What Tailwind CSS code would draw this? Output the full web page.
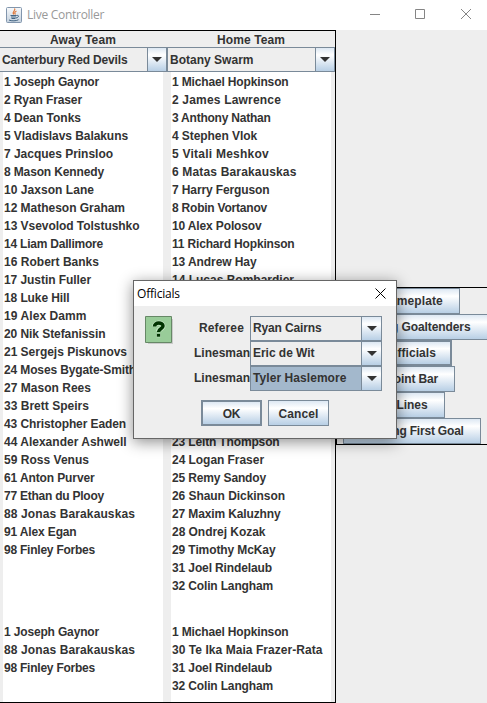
<!DOCTYPE html>
<html lang="en"><head><meta charset="utf-8"><title>Live Controller</title>
<script src="https://cdn.jsdelivr.net/npm/@tailwindcss/browser@4"></script></head>
<body class="w-[487px] h-[703px] overflow-hidden bg-[#eeeeee] relative font-['Liberation_Sans',Arial,sans-serif] font-bold text-[12px] leading-[18px] text-[#333333] whitespace-nowrap">
<header class="h-[30px] bg-white flex items-center font-normal font-['Open_Sans','Noto_Sans',sans-serif] text-[#999999]">
<svg class="ml-[6px] w-4 h-4 shrink-0" viewBox="0 0 16 16"><defs><linearGradient id="j" x2="0" y2="1"><stop stop-color="#f8fafc"/><stop offset="1" stop-color="#c3d0dd"/></linearGradient></defs><rect x=".5" y=".5" width="15" height="15" rx="1" fill="url(#j)" stroke="#8296ad"/><path d="M8.500 1.500c1.800 2-3 3-.8 6M10.500 4c-2 1-2.200 2-1 3.500" fill="none" stroke="#e07a3c" stroke-width="1.200"/><path d="M4.500 8.500h6M5 10h5M5.500 11.500h4M10.500 8.500c3-.8 2.500 2-.5 2.500M3 13c2 1.300 8 1 9.500-.3" fill="none" stroke="#456684"/></svg>
<span class="ml-[5px] text-[12px] tracking-[-0.28px]">Live Controller</span>
<svg class="ml-auto w-[117px] h-[30px] shrink-0" viewBox="370 0 117 30" fill="none" stroke="#858585"><path d="M370 14.500h10M415.500 9.500h9v9h-9zM461 9l10 10M471 9l-10 10"/></svg>
</header>
<div class="flex">
<main class="w-[336px] h-[673px] border-t border-r border-b border-black grid grid-cols-[168px_167px]">
<section class="flex flex-col">
<h2 class="h-4 pl-[50px] leading-[18px]"><span data-w="66">Away Team</span></h2>
<div class="w-[167px] h-[25px] border border-l-0 border-[#7a8a99] flex"><span class="flex-1 pl-[2px] leading-[24px]"><span data-w="125.500">Canterbury Red Devils</span></span><span class="w-[19px] border-l border-[#7a8a99] bg-linear-to-b from-[#dde8f3] via-white via-30% to-[#b8cfe5] flex items-center justify-center"><svg class="w-[10px] h-[5px]" viewBox="0 0 10 5"><path d="M0 0h10L5 5z" fill="#333"/></svg></span></div>
<div class="ml-[3px] w-[160px] h-[550px] bg-white pl-px pt-px" id="away"></div>
<div class="ml-[3px] w-[160px] h-[80px] bg-white pl-px pt-px" id="awayNet"></div>
</section>
<section class="flex flex-col">
<h2 class="h-4 pl-[49px] leading-[18px]"><span data-w="68">Home Team</span></h2>
<div class="-ml-px h-[25px] border border-[#7a8a99] flex"><span class="flex-1 pl-[2px] leading-[24px]"><span data-w="83.500">Botany Swarm</span></span><span class="w-[19px] border-l border-[#7a8a99] bg-linear-to-b from-[#dde8f3] via-white via-30% to-[#b8cfe5] flex items-center justify-center"><svg class="w-[10px] h-[5px]" viewBox="0 0 10 5"><path d="M0 0h10L5 5z" fill="#333"/></svg></span></div>
<div class="ml-[3px] mr-1 h-[550px] bg-white pl-px pt-px" id="home"></div>
<div class="ml-[3px] mr-1 h-[80px] bg-white pl-px pt-px" id="homeNet"></div>
</section>
</main>
<aside class="mt-[257px] w-[151px] h-[158px] border-y border-l border-black overflow-hidden">
<div class="w-[150px] flex flex-col items-center leading-[24px]">
<button class="h-[26px] w-24 border border-[#7a8a99] bg-linear-to-b from-[#dde8f3] via-white via-30% to-[#b8cfe5]"><span data-w="61.500">Nameplate</span></button>
<button class="h-[26px] w-[152px] border border-[#7a8a99] bg-linear-to-b from-[#dde8f3] via-white via-30% to-[#b8cfe5]"><span data-w="117">Starting Goaltenders</span></button>
<button class="h-[26px] w-20 border-2 border-[#7a8a99] bg-linear-to-b from-[#dde8f3] via-white via-30% to-[#b8cfe5] leading-[22px]"><span data-w="48">Officials</span></button>
<button class="h-[26px] w-[86px] border border-[#7a8a99] bg-linear-to-b from-[#dde8f3] via-white via-30% to-[#b8cfe5]"><span data-w="52">Point Bar</span></button>
<button class="h-[26px] w-[66px] border border-[#7a8a99] bg-linear-to-b from-[#dde8f3] via-white via-30% to-[#b8cfe5]"><span data-w="31">Lines</span></button>
<button class="h-[26px] w-[138px] border border-[#7a8a99] bg-linear-to-b from-[#dde8f3] via-white via-30% to-[#b8cfe5] pl-[3px]"><span data-w="100.500">Scoring First Goal</span></button>
</div></aside>
</div>
<div role="dialog" class="absolute left-[133px] top-[280px] w-[264px] h-[159px] border border-[#666666] bg-[#eeeeee] shadow-[0_3px_14px_rgba(0,0,0,0.45)]">
<div class="h-[25px] bg-white flex items-center justify-between pl-[3px] pr-[10px] font-normal font-['Open_Sans','Noto_Sans',sans-serif] text-black"><span class="tracking-[-0.2px]">Officials</span><svg class="w-[11px] h-[11px] -mt-px" viewBox="0 0 11 11"><path d="M.5.5l10 10M10.500.5l-10 10" stroke="#000" fill="none"/></svg></div>
<div class="flex pt-[10px]">
<svg class="ml-[11px] w-[30px] h-[30px] shrink-0" viewBox="0 0 30 30"><path d="M3 3h25v25H3z" fill="#bbb" opacity=".7"/><path d="M.5.5h26v26H.5z" fill="#99cc99" stroke="#668866"/><path d="M9.500 10.500c0-4.500 8.500-4.500 8.500-.5 0 3-4.500 2.500-4.500 5.500" fill="none" stroke="#c4e6c4" stroke-width="5"/><path d="M11.500 17.500h4v3.500h-4z" fill="#003300" stroke="#c4e6c4" stroke-width=".6"/><path d="M9.500 10.500c0-4.500 8.500-4.500 8.500-.5 0 3-4.500 2.500-4.500 6" fill="none" stroke="#003300" stroke-width="3.500"/></svg>
<div class="ml-[19px] flex flex-col leading-[23px]">
<div class="flex h-[25px]"><label class="w-14 pl-[5px] leading-[25px]"><span data-w="45">Referee</span></label><div class="w-[132px] border border-[#7a8a99] flex"><span class="flex-1 pl-[2px]"><span data-w="68.500">Ryan Cairns</span></span><span class="w-5 border-l border-[#7a8a99] bg-linear-to-b from-[#dde8f3] via-white via-30% to-[#b8cfe5] flex items-center justify-center"><svg class="w-[10px] h-[5px]" viewBox="0 0 10 5"><path d="M0 0h10L5 5z" fill="#333"/></svg></span></div></div>
<div class="flex h-[25px]"><label class="w-14 leading-[25px]"><span data-w="56">Linesman</span></label><div class="w-[132px] border border-[#7a8a99] flex"><span class="flex-1 pl-[2px]"><span data-w="61.500">Eric de Wit</span></span><span class="w-5 border-l border-[#7a8a99] bg-linear-to-b from-[#dde8f3] via-white via-30% to-[#b8cfe5] flex items-center justify-center"><svg class="w-[10px] h-[5px]" viewBox="0 0 10 5"><path d="M0 0h10L5 5z" fill="#333"/></svg></span></div></div>
<div class="flex h-[25px]"><label class="w-14 leading-[25px]"><span data-w="56">Linesman</span></label><div class="w-[132px] border border-[#7a8a99] flex"><span class="flex-1 pl-[2px] bg-[#a3b8cc]"><span data-w="93.500">Tyler Haslemore</span></span><span class="w-5 border-l border-[#7a8a99] bg-linear-to-b from-[#dde8f3] via-white via-30% to-[#b8cfe5] flex items-center justify-center"><svg class="w-[10px] h-[5px]" viewBox="0 0 10 5"><path d="M0 0h10L5 5z" fill="#333"/></svg></span></div></div>
</div></div>
<div class="mt-[9px] ml-[67px] flex gap-[6px]">
<button class="w-[61px] h-[26px] border-2 border-[#7a8a99] bg-linear-to-b from-[#dde8f3] via-white via-30% to-[#b8cfe5] pt-px"><span data-w="17.500">OK</span></button>
<button class="w-[61px] h-[26px] border border-[#7a8a99] bg-linear-to-b from-[#dde8f3] via-white via-30% to-[#b8cfe5] pt-px"><span data-w="40">Cancel</span></button>
</div>
</div>
<script>
const lists = {
away: [["1 Joseph Gaynor",95],["2 Ryan Fraser",78],["4 Dean Tonks",77],["5 Vladislavs Balakuns",124],["7 Jacques Prinsloo",109],["8 Mason Kennedy",100],["10 Jaxson Lane",90],["12 Matheson Graham",121],["13 Vsevolod Tolstushko",135.5],["14 Liam Dallimore",99],["16 Robert Banks",95],["17 Justin Fuller",87],["18 Luke Hill",65.5],["19 Alex Damm",83],["20 Nik Stefanissin",101.5],["21 Sergejs Piskunovs",123],["24 Moses Bygate-Smith",132],["27 Mason Rees",87],["33 Brett Speirs",85],["43 Christopher Eaden",122],["44 Alexander Ashwell",123.5],["59 Ross Venus",85],["61 Anton Purver",91],["77 Ethan du Plooy",100],["88 Jonas Barakauskas",131],["91 Alex Egan",73],["98 Finley Forbes",91]],
home: [["1 Michael Hopkinson",116.5],["2 James Lawrence",109],["3 Anthony Nathan",99],["4 Stephen Vlok",85],["5 Vitali Meshkov",97],["6 Matas Barakauskas",124.5],["7 Harry Ferguson",97.5],["8 Robin Vortanov",95],["10 Alex Polosov",90],["11 Richard Hopkinson",122.5],["13 Andrew Hay",85],["14 Lucas Bombardier",122],"","","","","","","","",["23 Leith Thompson",107.5],["24 Logan Fraser",92],["25 Remy Sandoy",94],["26 Shaun Dickinson",113],["27 Maxim Kaluzhny",108.5],["28 Ondrej Kozak",93.5],["29 Timothy McKay",103.5],["31 Joel Rindelaub",100],["32 Colin Langham",101]],
awayNet: [["1 Joseph Gaynor",95],["88 Jonas Barakauskas",131],["98 Finley Forbes",91]],
homeNet: [["1 Michael Hopkinson",116.5],["30 Te Ika Maia Frazer-Rata",150.5],["31 Joel Rindelaub",100],["32 Colin Langham",101]]};
for (const [id, names] of Object.entries(lists)) for (const n of names) {
 const d = document.createElement("div"), s = document.createElement("span");
 d.className = "h-[18px]";
 if (n) { s.textContent = n[0]; s.dataset.w = n[1]; }
 d.append(s); document.getElementById(id).append(d);
}
// Fit each label to its width by spreading the difference over its letters.
const ctx = document.createElement("canvas").getContext("2d");
ctx.font = "bold 12px 'Liberation Sans', Arial, sans-serif";
for (const s of document.querySelectorAll("[data-w]"))
 s.style.letterSpacing = (s.dataset.w - ctx.measureText(s.textContent).width) / s.textContent.length + "px";
</script>
</body></html>
